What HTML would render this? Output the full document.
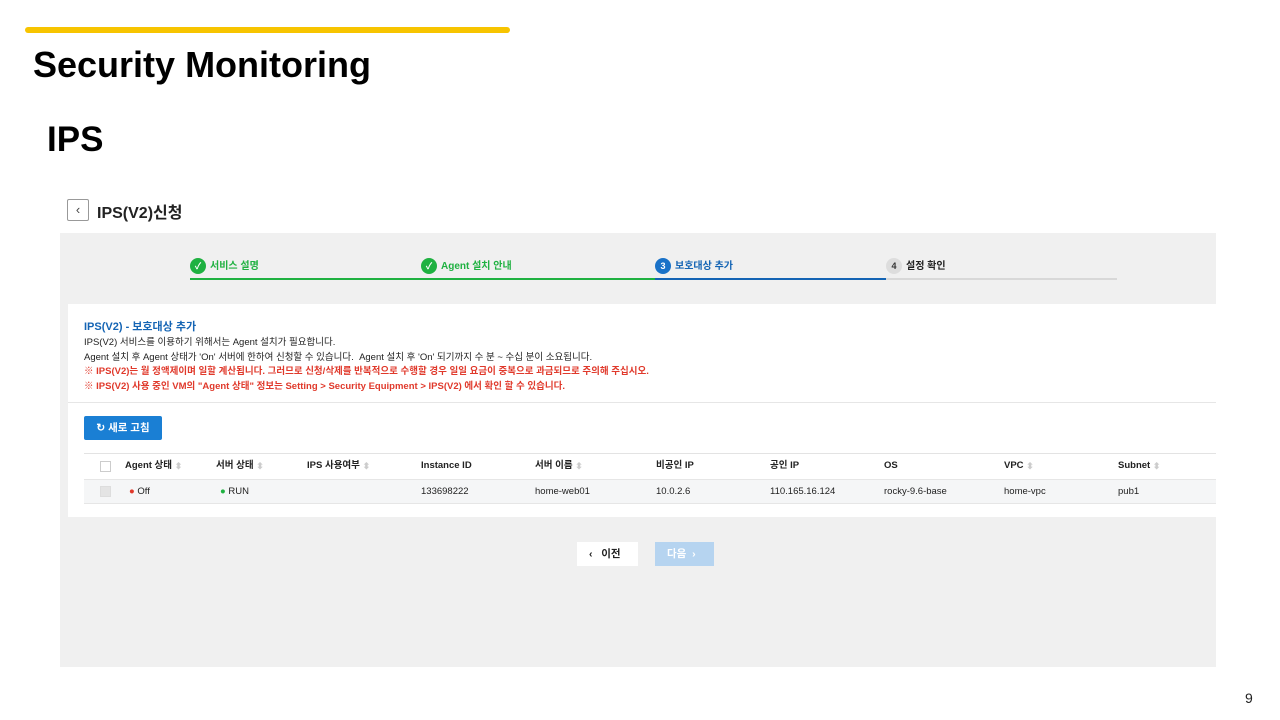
<!DOCTYPE html>
<html><head><meta charset="utf-8"><style>
*{margin:0;padding:0;box-sizing:border-box}
body{width:1280px;height:720px;background:#fff;position:relative;overflow:hidden;font-family:"Liberation Sans","Noto Sans CJK KR",sans-serif;color:#222}
.a{position:absolute;white-space:nowrap}
.bar{left:25px;top:27px;width:485px;height:6px;background:#f7c400;border-radius:3px}
.h1{left:33px;top:44px;font-size:36px;line-height:42px;font-weight:bold;color:#000}
.h2{left:47px;top:119px;font-size:35px;line-height:42px;font-weight:bold;color:#000}
.panel{left:60px;top:233px;width:1156px;height:434px;background:#f0f0f0}
.card{left:68px;top:304px;width:1148px;height:213px;background:#fff}
.s{font-size:10px;font-weight:bold}
.ci{width:16px;height:16px;border-radius:50%;display:inline-block;vertical-align:middle;margin-right:4px;text-align:center;line-height:16px;font-size:9px;color:#fff}
.t{font-size:9.5px;color:#222}
.r{color:#e0392b;font-weight:bold;font-size:9.5px}
.th{font-size:9.5px;font-weight:bold;top:460px;line-height:12px}
.td{font-size:9.5px;top:486px;line-height:12px}
.so{color:#ccc;font-size:9px;line-height:12px;vertical-align:top}
</style></head><body>
<div class="a bar"></div>
<div class="a h1">Security Monitoring</div>
<div class="a h2">IPS</div>
<div class="a" style="left:67px;top:199px;width:22px;height:22px;border:1px solid #999;border-radius:2px;text-align:center;line-height:19px;font-size:13px;color:#444">‹</div>
<div class="a" style="left:97px;top:199px;font-size:16px;font-weight:bold">IPS(V2)신청</div>
<div class="a panel"></div>
<div class="a" style="left:190px;top:278px;width:465px;height:2px;background:#1fb141"></div>
<div class="a" style="left:655px;top:278px;width:231px;height:2px;background:#1464b4"></div>
<div class="a" style="left:886px;top:278px;width:231px;height:2px;background:#d8d8d8"></div>
<div class="a s" style="left:190px;top:257px;color:#1fb141"><span class="ci" style="background:#1fb141">✓</span>서비스 설명</div>
<div class="a s" style="left:421px;top:257px;color:#1fb141"><span class="ci" style="background:#1fb141">✓</span>Agent 설치 안내</div>
<div class="a s" style="left:655px;top:257px;color:#1464b4"><span class="ci" style="background:#1a72c8">3</span>보호대상 추가</div>
<div class="a s" style="left:886px;top:257px;color:#222"><span class="ci" style="background:#ddd;color:#333">4</span>설정 확인</div>
<div class="a card"></div>
<div class="a" style="left:84px;top:318px;font-size:11px;font-weight:bold;color:#1464b4">IPS(V2) - 보호대상 추가</div>
<div class="a t" style="left:84px;top:334px">IPS(V2) 서비스를 이용하기 위해서는 Agent 설치가 필요합니다.</div>
<div class="a t" style="left:84px;top:349px">Agent 설치 후 Agent 상태가 'On' 서버에 한하여 신청할 수 있습니다.&nbsp; Agent 설치 후 'On' 되기까지 수 분 ~ 수십 분이 소요됩니다.</div>
<div class="a r" style="left:84px;top:363px">※ IPS(V2)는 월 정액제이며 일할 계산됩니다. 그러므로 신청/삭제를 반복적으로 수행할 경우 일일 요금이 중복으로 과금되므로 주의해 주십시오.</div>
<div class="a r" style="left:84px;top:378px">※ IPS(V2) 사용 중인 VM의 "Agent 상태" 정보는 Setting &gt; Security Equipment &gt; IPS(V2) 에서 확인 할 수 있습니다.</div>
<div class="a" style="left:68px;top:402px;width:1148px;height:1px;background:#e6e6e6"></div>
<div class="a" style="left:84px;top:416px;width:78px;height:24px;background:#1a7fd4;border-radius:2px;color:#fff;font-size:10.5px;font-weight:bold;text-align:center;line-height:24px">↻ 새로 고침</div>
<div class="a" style="left:84px;top:453px;width:1132px;height:1px;background:#e3e3e3"></div>
<div class="a" style="left:84px;top:479px;width:1132px;height:25px;background:#f5f6f7;border-top:1px solid #e6e6e6;border-bottom:1px solid #e6e6e6"></div>
<div class="a" style="left:100px;top:461px;width:11px;height:11px;border:1px solid #ccc;background:#fff"></div>
<div class="a" style="left:100px;top:486px;width:11px;height:11px;background:#e4e4e4;border:1px solid #ddd"></div>
<div class="a th" style="left:125px">Agent 상태 <span class="so">⬍</span></div>
<div class="a th" style="left:216px">서버 상태 <span class="so">⬍</span></div>
<div class="a th" style="left:307px">IPS 사용여부 <span class="so">⬍</span></div>
<div class="a th" style="left:421px">Instance ID</div>
<div class="a th" style="left:535px">서버 이름 <span class="so">⬍</span></div>
<div class="a th" style="left:656px">비공인 IP</div>
<div class="a th" style="left:770px">공인 IP</div>
<div class="a th" style="left:884px">OS</div>
<div class="a th" style="left:1004px">VPC <span class="so">⬍</span></div>
<div class="a th" style="left:1118px">Subnet <span class="so">⬍</span></div>
<div class="a td" style="left:129px"><span style="color:#e0392b">●</span> Off</div>
<div class="a td" style="left:220px"><span style="color:#1fb141">●</span> RUN</div>
<div class="a td" style="left:421px">133698222</div>
<div class="a td" style="left:535px">home-web01</div>
<div class="a td" style="left:656px">10.0.2.6</div>
<div class="a td" style="left:770px">110.165.16.124</div>
<div class="a td" style="left:884px">rocky-9.6-base</div>
<div class="a td" style="left:1004px">home-vpc</div>
<div class="a td" style="left:1118px">pub1</div>
<div class="a" style="left:577px;top:542px;width:61px;height:24px;background:#fff;font-size:10.5px;font-weight:bold;line-height:24px;padding-left:12px">‹ &nbsp; 이전</div>
<div class="a" style="left:655px;top:542px;width:59px;height:24px;background:#b6d4f0;color:#fff;font-size:10.5px;font-weight:bold;line-height:24px;padding-left:12px">다음 &nbsp;›</div>
<div class="a" style="left:1245px;top:690px;font-size:14px">9</div>
</body></html>
